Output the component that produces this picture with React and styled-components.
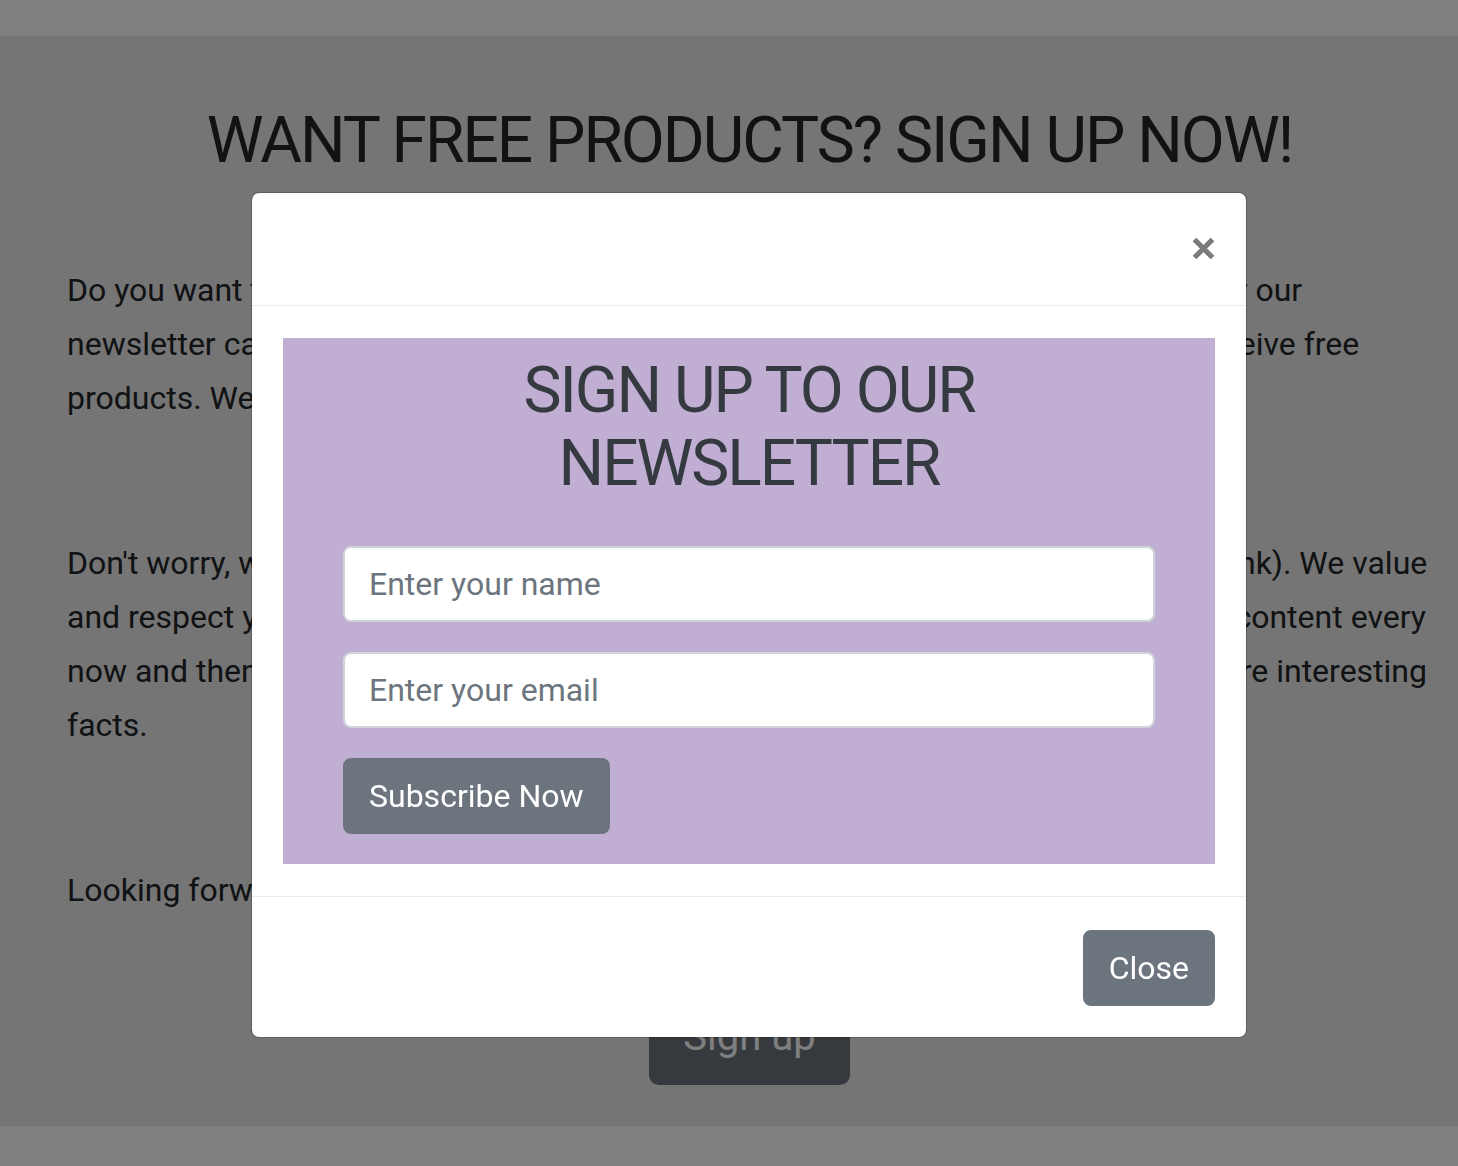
import React from 'react'
import styled, { createGlobalStyle } from 'styled-components'

const GlobalStyle = createGlobalStyle`
  html, body {
    margin: 0;
    padding: 0;
    background: #fff;
  }
  body {
    font-family: Roboto, "Liberation Sans", sans-serif;
    color: #212529;
  }
  * { box-sizing: border-box; }
`

const App = () => (
  <>
    <GlobalStyle />
    <Page>
      <Jumbotron>
        <PageTitle>WANT FREE PRODUCTS? SIGN UP NOW!</PageTitle>
        <Lead>
          Do you want to get free products delivered right to your front door? Then sign up for our<br />
          newsletter cause every month we choose some very lucky subscribers who will receive free<br />
          products. We ship them worldwide!
        </Lead>
        <Lead>
          Don't worry, we won't spam you (we hate that just as much as you do, all spam is junk). We value<br />
          and respect your privacy, and we promise to only ever send you really great-quality content every<br />
          now and then. Every issue comes with exclusive offers, free samples and some more interesting<br />
          facts.
        </Lead>
        <Lead $last>Looking forward to seeing you on our list!</Lead>
        <ButtonRow>
          <LargeButton>Sign up</LargeButton>
        </ButtonRow>
      </Jumbotron>
    </Page>

    <Backdrop />
    <ModalWrap>
      <ModalContent>
        <ModalHeader>
          <CloseX aria-label='Close'>
            <svg width='23' height='23' viewBox='0 0 23 23'>
              <path d='M2.5 2.5 L20.5 20.5 M20.5 2.5 L2.5 20.5' stroke='currentColor' strokeWidth='5.2' fill='none' />
            </svg>
          </CloseX>
        </ModalHeader>
        <ModalBody>
          <SignupBox>
            <BoxTitle>SIGN UP TO OUR<br />NEWSLETTER</BoxTitle>
            <Field type='text' placeholder='Enter your name' />
            <Field type='email' placeholder='Enter your email' />
            <Button>Subscribe Now</Button>
          </SignupBox>
        </ModalBody>
        <ModalFooter>
          <Button>Close</Button>
        </ModalFooter>
      </ModalContent>
    </ModalWrap>
  </>
)

const Page = styled.div`
  padding: 36px 0 40px;
`

const Jumbotron = styled.section`
  background: #eaeaea;
  padding: 68px 26px 41px 67px;
`

const PageTitle = styled.h1`
  margin: 0 0 86px;
  font-size: 64px;
  line-height: 73px;
  font-weight: 400;
  letter-spacing: -2px;
  text-align: center;
  color: #212529;
`

const Lead = styled.p`
  margin: 0 0 ${p => (p.$last ? '0' : '111px')};
  font-size: 32px;
  line-height: 54px;
  white-space: nowrap;
`

const ButtonRow = styled.div`
  display: flex;
  justify-content: center;
  margin-top: 72px;
`

const LargeButton = styled.button`
  font-family: Roboto, "Liberation Sans", sans-serif;
  font-size: 40px;
  line-height: 60px;
  padding: 16px 32px;
  border: 2px solid #6c757d;
  border-radius: 10px;
  background: #6c757d;
  color: #fff;
`

const Backdrop = styled.div`
  position: fixed;
  inset: 0;
  background: rgba(0, 0, 0, 0.5);
`

const ModalWrap = styled.div`
  position: fixed;
  inset: 0;
  display: flex;
  justify-content: center;
  align-items: flex-start;
  padding: 192px 0 0 40px;
`

const ModalContent = styled.div`
  width: 996px;
  background: #fff;
  border: 1px solid rgba(0, 0, 0, 0.2);
  border-radius: 8px;
  background-clip: padding-box;
  display: flex;
  flex-direction: column;
`

const ModalHeader = styled.div`
  display: flex;
  justify-content: flex-end;
  align-items: center;
  padding: 32px 31px;
  height: 113px;
  border-bottom: 1px solid #e9ecef;
`

const CloseX = styled.button`
  display: flex;
  align-items: center;
  justify-content: center;
  width: 23px;
  height: 48px;
  padding: 0;
  border: none;
  background: transparent;
  color: #7b7b7b;
  margin-top: -2px;
`

const ModalBody = styled.div`
  padding: 32px 31px;
`

const SignupBox = styled.div`
  background: #c0aed3;
  padding: 16px 60px 30px;
  display: flex;
  flex-direction: column;
  align-items: stretch;
`

const BoxTitle = styled.h2`
  margin: 0 0 46px;
  font-size: 64px;
  line-height: 73px;
  font-weight: 400;
  letter-spacing: -2px;
  text-align: center;
  color: #343a40;
`

const Field = styled.input`
  display: block;
  height: 76px;
  margin-bottom: 30px;
  padding: 0 24px;
  font-family: Roboto, "Liberation Sans", sans-serif;
  font-size: 32px;
  color: #495057;
  background: #fff;
  border: 2px solid #ced4da;
  border-radius: 8px;
  outline: none;

  &::placeholder {
    color: #6c757d;
  }
`

const Button = styled.button`
  align-self: flex-start;
  height: 76px;
  padding: 0 24px;
  font-family: Roboto, "Liberation Sans", sans-serif;
  font-size: 32px;
  line-height: 48px;
  color: #fff;
  background: #6c757d;
  border: 2px solid #6c757d;
  border-radius: 8px;
`

const ModalFooter = styled.div`
  display: flex;
  justify-content: flex-end;
  padding: 33px 31px 31px;
  border-top: 1px solid #e9ecef;
`

export default App
